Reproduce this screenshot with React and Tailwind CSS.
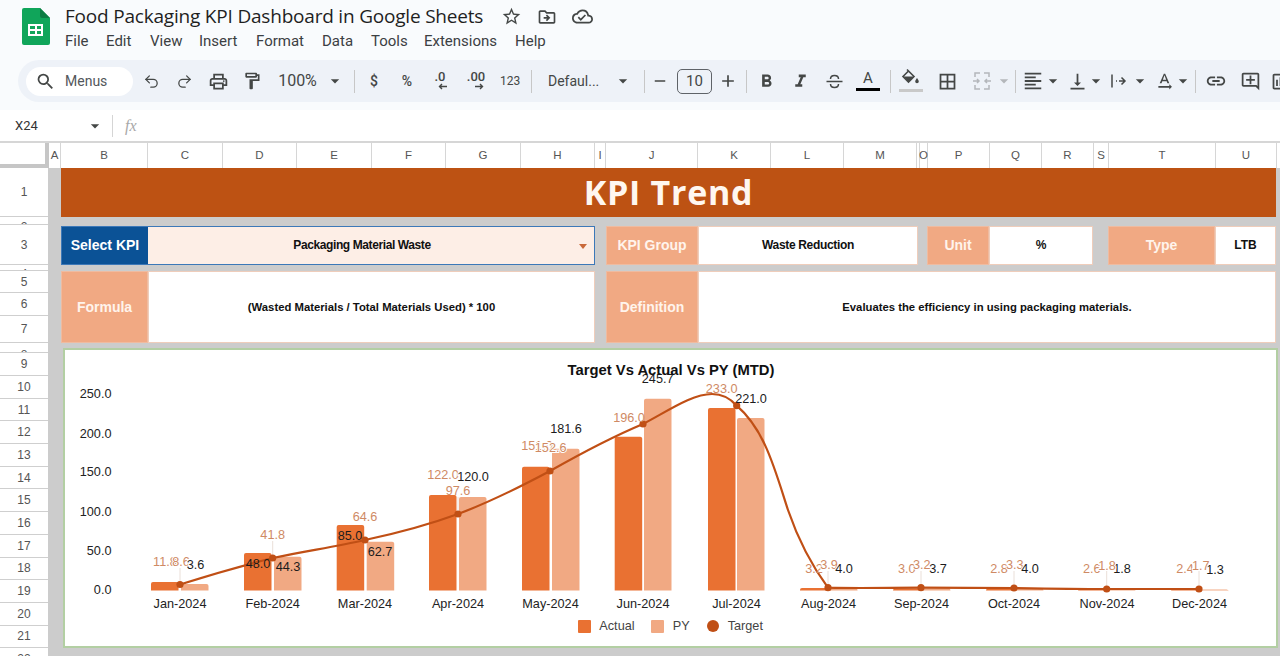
import React from "react";
import {
  MdSearch, MdOutlinePrint, MdOutlineFormatPaint, MdOutlineStarBorder,
  MdOutlineDriveFileMove, MdOutlineCloudDone, MdArrowDropDown, MdRemove, MdAdd,
  MdFormatBold, MdFormatItalic, MdBorderAll,
  MdFormatAlignLeft, MdVerticalAlignBottom, MdTextRotationNone, MdLink, MdOutlineAddComment,
  MdOutlineInsertChart,
} from "react-icons/md";
import { Undo2, Redo2 } from "lucide-react";

const ico = "#444746";
const Slot = ({ className = "", children }) => (
  <div className={`flex shrink-0 items-center justify-center ${className}`}>{children}</div>
);
const Sep = ({ className = "" }) => (
  <Slot className={className}><div className="h-[23px] w-px bg-[#c7c7c7]" /></Slot>
);
const Caret = ({ className = "w-[16px]", color = ico }) => (
  <Slot className={className}><MdArrowDropDown size={20} color={color} className="shrink-0" /></Slot>
);
const Decimal = ({ text, dir }) => (
  <div className="flex flex-col items-center text-[13px] font-medium leading-[12px] text-[#444746]">
    <span>{text}</span>
    <svg width="12" height="8" viewBox="0 0 12 8" className="ml-[6px]">
      {dir === "l"
        ? <path d="M10 3.5H3M5 1 2.5 3.5 5 6" fill="none" stroke="#444746" strokeWidth="1.4" />
        : <path d="M2 3.5h7M7 1l2.5 2.5L7 6" fill="none" stroke="#444746" strokeWidth="1.4" />}
    </svg>
  </div>
);

function Toolbar() {
  return (
    <div className="ml-[18px] flex h-[42px] items-center rounded-l-[21px] bg-[#eef2f8] pl-[8px] text-[#444746]">
      <div className="flex h-[29px] w-[107px] shrink-0 items-center rounded-full bg-white pl-[9px]">
        <MdSearch size={21} color={ico} />
        <span className="ml-[9px] text-[14px] text-[#53575b]">Menus</span>
      </div>
      <Slot className="ml-px w-[34px]"><Undo2 size={17} color={ico} strokeWidth={1.8} /></Slot>
      <Slot className="w-[33px]"><Redo2 size={17} color={ico} strokeWidth={1.8} /></Slot>
      <Slot className="w-[34px]"><MdOutlinePrint size={21} color={ico} /></Slot>
      <Slot className="w-[34px]"><MdOutlineFormatPaint size={20} color={ico} /></Slot>
      <Slot className="w-[57px] text-[16px]">100%</Slot>
      <Caret className="w-[18px]" />
      <Sep className="w-[20px]" />
      <Slot className="w-[20px] text-[14px] font-medium">$</Slot>
      <Slot className="w-[46px] text-[14px] font-medium">%</Slot>
      <Slot className="w-[20px]"><Decimal text=".0" dir="l" /></Slot>
      <Slot className="w-[52px]"><Decimal text=".00" dir="r" /></Slot>
      <Slot className="w-[16px] text-[12px]">123</Slot>
      <Sep className="w-[26px]" />
      <div className="w-[68px] shrink-0 pl-[4px] text-[14px]">Defaul...</div>
      <Caret className="w-[22px]" />
      <Sep className="w-[20px]" />
      <Slot className="w-[12px]"><MdRemove size={18} color={ico} className="shrink-0" /></Slot>
      <Slot className="ml-[11px] h-[25px] w-[35px] rounded-[5px] border border-[#5f6368] text-[15px]">10</Slot>
      <Slot className="w-[32px]"><MdAdd size={20} color={ico} /></Slot>
      <Sep className="w-[4px]" />
      <Slot className="w-[36px]"><MdFormatBold size={21} color={ico} /></Slot>
      <Slot className="w-[32px]"><MdFormatItalic size={21} color={ico} /></Slot>
      <Slot className="w-[36px]">
        <svg width="19" height="19" viewBox="0 0 19 19" fill="none" stroke="#444746" strokeWidth="1.5">
          <path d="M1.500 9.500h16M5.500 7c0-2.200 1.800-3.500 4-3.500s4 1.300 4 3.500M5.500 12c0 2.200 1.800 3.500 4 3.500s4-1.300 4-3.500" />
        </svg>
      </Slot>
      <Slot className="w-[32px] flex-col">
        <span className="text-[15px] leading-[15px]">A</span>
        <div className="mt-[2px] h-[3px] w-[24px] bg-black" />
      </Slot>
      <Sep className="w-[12px]" />
      <Slot className="w-[30px] flex-col">
        <svg width="20" height="18" viewBox="0 0 20 18" className="-mt-[3px]">
          <path d="M6 1.500 13 8.500 7.500 14 2 8.500 7.500 3" fill="none" stroke="#444746" strokeWidth="1.6" />
          <path d="M2.500 8.500H13L7.500 14Z" fill="#444746" />
          <path d="M16 10c1 1.600 1.800 2.400 1.800 3.500a1.800 1.800 0 0 1-3.600 0c0-1.100.8-1.900 1.800-3.500Z" fill="#444746" />
        </svg>
        <div className="mt-[3px] h-[3px] w-[24px] bg-[#c9c9c9]" />
      </Slot>
      <Slot className="w-[42px]"><MdBorderAll size={21} color={ico} /></Slot>
      <Slot className="w-[28px]">
        <svg width="20" height="20" viewBox="0 0 20 20" fill="none" stroke="#b4b7bb" strokeWidth="1.5">
          <path d="M8 2H3v4M3 14v4h5M12 2h5v4M17 14v4h-5M1 10h6M5 8l2 2-2 2M19 10h-6M15 8l-2 2 2 2" />
        </svg>
      </Slot>
      <Caret className="w-[16px]" color="#b4b7bb" />
      <Sep className="w-[6px]" />
      <Slot className="w-[30px]"><MdFormatAlignLeft size={22} color={ico} /></Slot>
      <Caret className="w-[10px]" />
      <Slot className="ml-[6px] w-[26px]"><MdVerticalAlignBottom size={21} color={ico} /></Slot>
      <Caret className="w-[12px]" />
      <Slot className="ml-[2px] w-[24px] pl-[6px]">
        <svg width="18" height="18" viewBox="0 0 18 18" fill="none" stroke="#444746" strokeWidth="1.5">
          <path d="M2 2.500v13M6 9h1M9 9h5.500M11.500 5.500 15 9l-3.500 3.500" />
        </svg>
      </Slot>
      <Caret className="ml-[6px] w-[12px]" />
      <Slot className="ml-[5px] w-[26px]"><MdTextRotationNone size={21} color={ico} /></Slot>
      <Caret className="w-[12px]" />
      <Sep className="w-[13px]" />
      <Slot className="w-[28px]"><MdLink size={22} color={ico} /></Slot>
      <Slot className="w-[40px]"><MdOutlineAddComment size={21} color={ico} /></Slot>
      <Slot className="w-[10px] pl-[10px]"><MdOutlineInsertChart size={21} color={ico} className="shrink-0" /></Slot>
    </div>
  );
}

const columns = [
  ["A", "w-[12px]"], ["B", "w-[87px]"], ["C", "w-[75px]"], ["D", "w-[74px]"], ["E", "w-[75px]"],
  ["F", "w-[74px]"], ["G", "w-[75px]"], ["H", "w-[74px]"], ["I", "w-[11px]"], ["J", "w-[92px]"],
  ["K", "w-[73px]"], ["L", "w-[73px]"], ["M", "w-[73px]"], ["", "w-[3px]"], ["O", "w-[8px]"],
  ["P", "w-[62px]"], ["Q", "w-[52px]"], ["R", "w-[52px]"], ["S", "w-[15px]"], ["T", "w-[107px]"],
  ["U", "w-[61px]"], ["", "w-[4px]"],
];

const rows = [
  ["1", "h-[49px] items-center"], ["2", "h-[8px] items-start pt-[4px]"], ["3", "h-[40px] items-center"], ["4", "h-[6px] items-start pt-[3px]"],
  ["5", "h-[22px] items-center"], ["6", "h-[23px] items-center"], ["7", "h-[27px] items-center"], ["8", "h-[10px] items-start pt-[6px]"],
  ["9", "h-[23px] items-center"], ["10", "h-[22.700px] items-center"], ["11", "h-[22.700px] items-center"], ["12", "h-[22.700px] items-center"],
  ["13", "h-[22.700px] items-center"], ["14", "h-[22.700px] items-center"], ["15", "h-[22.700px] items-center"], ["16", "h-[22.700px] items-center"],
  ["17", "h-[22.700px] items-center"], ["18", "h-[22.700px] items-center"], ["19", "h-[22.700px] items-center"], ["20", "h-[22.700px] items-center"],
  ["21", "h-[22.700px] items-center"], ["22", "h-[22.700px] items-center"],
];

const bars = [
  [151, 582, "a"], [181, 584, "p"], [244, 553, "a"], [274, 556.7, "p"], [336.7, 525, "a"], [366.7, 541.7, "p"],
  [429, 495, "a"], [459, 497, "p"], [522, 466.7, "a"], [552, 448.7, "p"], [614.7, 436.7, "a"], [644, 398.7, "p"],
  [708, 408, "a"], [737, 418, "p"], [800, 588, "a"], [830, 588, "p"], [893, 588.5, "a"], [923, 588.5, "p"],
  [986, 588.5, "a"], [1016, 588.5, "p"], [1078, 589, "a"], [1108, 589, "p"], [1171, 589, "a"], [1201, 589.5, "p"],
];
const points = [
  [180, 584.5], [272.7, 558], [365, 540], [458, 514], [550, 471], [643, 424],
  [736.7, 405.7], [828, 587.7], [921, 587.7], [1014, 588], [1106.7, 589], [1199, 589],
];
const O = "#cf8a64";
const K = "#1c1c1c";
const labels = [
  [165, 562, "11.8", O], [181, 562, "8.6", O, 1], [195.5, 565, "3.6", K, 1],
  [272.7, 534.7, "41.8", O], [258, 564, "48.0", K], [288, 566.7, "44.3", K],
  [365, 516.7, "64.6", O], [350, 536, "85.0", K], [380, 552, "62.7", K],
  [443, 475, "122.0", O], [473, 477, "120.0", K, 1], [458, 491, "97.6", O],
  [537, 446, "151.0", O], [550.7, 447.7, "152.6", O, 1], [566, 429, "181.6", K],
  [629, 417.7, "196.0", O], [657.7, 379, "245.7", K],
  [721.7, 388.7, "233.0", O], [751, 398.7, "221.0", K],
  [814, 568.7, "3.2", O], [829, 565, "3.9", O, 1], [844, 569, "4.0", K, 1],
  [906.7, 568.7, "3.0", O], [921.7, 565, "3.2", O, 1], [938, 568.7, "3.7", K, 1],
  [999, 568.7, "2.8", O], [1014.7, 565, "3.3", O, 1], [1030, 568.7, "4.0", K, 1],
  [1091.7, 569, "2.6", O], [1122, 569.3, "1.8", K], [1107, 565.5, "1.8", O, 1],
  [1185, 569.3, "2.4", O], [1215, 570, "1.3", K], [1200.7, 565.5, "1.7", O, 1],
];
const leaders = [[180, 568, 584], [272.7, 541, 558], [458, 497, 514], [828, 571, 587], [921, 571, 587], [1014, 571, 587], [1106.7, 571, 588], [1199, 571, 588]];
const yTicks = [["250.0", 394], ["200.0", 433.7], ["150.0", 472], ["100.0", 512], ["50.0", 550.7], ["0.0", 590]];
const months = [
  ["Jan-2024", 180], ["Feb-2024", 272.7], ["Mar-2024", 365], ["Apr-2024", 458], ["May-2024", 550.5], ["Jun-2024", 643],
  ["Jul-2024", 736.5], ["Aug-2024", 828.5], ["Sep-2024", 921.5], ["Oct-2024", 1014], ["Nov-2024", 1107], ["Dec-2024", 1199.5],
];
const curve =
  "M180 584.5C210 575 245 565 272.7 558C305 551 335 547 365 540C398 533 428 525 458 514C490 502 520 487 550 471C580 454 612 437 643 424C668 411 692 394 712 394C722 394 730 398 736.7 405.7C765 430 775 470 788 510C800 545 815 570 828 587.7C860 588.5 890 587.7 921 587.7C950 587.7 985 588 1014 588C1045 588.5 1075 589 1106.7 589L1199 589";

function Chart() {
  return (
    <svg viewBox="65 350 1210.5 296" className="block h-full w-full" fontFamily="'Liberation Sans', Arial, sans-serif">
      {bars.map(([x, top, k], i) => (
        <path
          key={i}
          d={`M${x} 590.5V${top + 2}Q${x} ${top} ${x + 2} ${top}H${x + 25.5}Q${x + 27.5} ${top} ${x + 27.5} ${top + 2}V590.5Z`}
          fill={k === "a" ? "#e97132" : "#f1a983"}
        />
      ))}
      {leaders.map(([x, a, b], i) => (
        <line key={i} x1={x} x2={x} y1={a} y2={b} stroke="#eadfd8" strokeWidth="1" />
      ))}
      <path d={curve} fill="none" stroke="#c04f15" strokeWidth="2.2" />
      {points.map(([x, y], i) => <circle key={i} cx={x} cy={y} r="3.6" fill="#c04f15" />)}
      {yTicks.map(([t, y]) => (
        <text key={t} x="111.5" y={y} textAnchor="end" dominantBaseline="central" fontSize="12.7" fill="#222">{t}</text>
      ))}
      {months.map(([t, x]) => (
        <text key={t} x={x} y="603.5" textAnchor="middle" dominantBaseline="central" fontSize="12.7" fill="#222">{t}</text>
      ))}
      {labels.map(([x, y, t, c, halo], i) => (
        <text
          key={i} x={x} y={y} textAnchor="middle" dominantBaseline="central" fontSize="12.7" fill={c}
          stroke={halo ? "#ffffff" : "none"} strokeWidth={halo ? 2 : 0} paintOrder="stroke"
        >{t}</text>
      ))}
      <text x="671" y="370" textAnchor="middle" dominantBaseline="central" fontSize="14.8" fontWeight="700" fill="#111">Target Vs Actual Vs PY (MTD)</text>
      <rect x="578" y="620" width="13" height="13" rx="1" fill="#e97132" />
      <text x="599.3" y="626" dominantBaseline="central" fontSize="12.7" fill="#444">Actual</text>
      <rect x="651" y="620" width="13" height="13" rx="1" fill="#f1a983" />
      <text x="672.7" y="626" dominantBaseline="central" fontSize="12.7" fill="#444">PY</text>
      <circle cx="713" cy="626" r="6" fill="#c04f15" />
      <text x="727.7" y="626" dominantBaseline="central" fontSize="12.7" fill="#444">Target</text>
    </svg>
  );
}

const Lbl = ({ className = "", children }) => (
  <div className={`flex items-center justify-center border border-[#efbba0] bg-[#f1a983] text-[14px] font-bold text-[#fff4ec] ${className}`}>{children}</div>
);
const Val = ({ className = "", children }) => (
  <div className={`flex items-center justify-center border border-[#efcdbb] bg-white font-bold text-[#111] ${className}`}>{children}</div>
);

export default function App() {
  return (
    <div className="h-[656px] w-[1280px] overflow-hidden bg-white font-['Roboto',sans-serif]">
      <header className="h-[110px] bg-[#f9fbfd]">
        <div className="flex h-[60px]">
          <div className="pl-[22px] pt-[8px]">
            <svg width="28" height="37" viewBox="0 0 28 37">
              <path d="M2 0H18L28 10V35a2 2 0 0 1-2 2H2a2 2 0 0 1-2-2V2a2 2 0 0 1 2-2Z" fill="#10a55a" />
              <path d="M18 0 28 10H20a2 2 0 0 1-2-2Z" fill="#0c7c43" />
              <path d="M6 16H21V28H6ZM8 18V21H13V18ZM15 18V21H19V18ZM8 23V26H13V23ZM15 23V26H19V23Z" fill="#fff" fillRule="evenodd" />
            </svg>
          </div>
          <div className="pl-[15px]">
            <div className="flex h-[33px] items-center">
              <h1 className="w-[418px] whitespace-nowrap font-['Open_Sans',sans-serif] text-[19px] tracking-[-0.2px] text-[#1f1f1f]">Food Packaging KPI Dashboard in Google Sheets</h1>
              <div className="ml-[18px] flex items-center gap-[15px]">
                <MdOutlineStarBorder size={21} color={ico} />
                <MdOutlineDriveFileMove size={20} color={ico} />
                <MdOutlineCloudDone size={21} color={ico} />
              </div>
            </div>
            <nav className="flex h-[16px] items-center text-[15px] text-[#3c4043]">
              <span className="w-[41px]">File</span>
              <span className="w-[44px]">Edit</span>
              <span className="w-[49px]">View</span>
              <span className="w-[57px]">Insert</span>
              <span className="w-[66px]">Format</span>
              <span className="w-[49px]">Data</span>
              <span className="w-[53px]">Tools</span>
              <span className="w-[91px]">Extensions</span>
              <span>Help</span>
            </nav>
          </div>
        </div>
        <Toolbar />
      </header>

      <div className="flex h-[31px] items-center bg-white">
        <div className="w-[85px] pl-[15px] text-[13px] text-[#333]">X24</div>
        <MdArrowDropDown size={20} color={ico} />
        <div className="ml-[7px] h-[22px] w-px bg-[#d5d5d5]" />
        <span className="ml-[12px] font-['Liberation_Serif',serif] text-[16px] italic text-[#a8a8a8]">fx</span>
      </div>

      <div className="flex h-[27px] border-t-2 border-[#d6d6d6] bg-white">
        <div className="w-[49px] shrink-0 border-b-[4px] border-r-[4px] border-[#c6c6c6]" />
        {columns.map(([c, w], i) => (
          <div key={i} className={`flex shrink-0 items-center justify-center border-r border-[#d6d6d6] font-['Liberation_Sans',sans-serif] text-[11.5px] text-[#555] ${w}`}>{c}</div>
        ))}
      </div>

      <div className="flex h-[488px] bg-[#cccccc] font-['Liberation_Sans',Arial,sans-serif]">
        <div className="w-[48px] shrink-0 overflow-hidden bg-white">
          {rows.map(([r, h]) => (
            <div key={r} className={`flex justify-center overflow-hidden border-b border-[#cfcfcf] text-[12px] leading-none text-[#555] ${h}`}>{r}</div>
          ))}
        </div>
        <main className="flex min-w-0 flex-1 flex-col pl-[13px] pr-[4px]">
          <div className="flex h-[49px] shrink-0 items-center justify-center bg-[#bd5213] font-['Open_Sans',sans-serif] text-[34px] font-bold tracking-[0.7px] text-[#fff7ef]">KPI Trend</div>
          <div className="mt-[8.5px] grid h-[117.5px] shrink-0 grid-cols-[87px_447px_11px_92px_220px_9px_62px_104px_15px_107px_61px] grid-rows-[39.5px_72px] gap-y-[6px]">
            <div className="flex items-center justify-center border border-r-0 border-[#3c78b8] bg-[#0b5296] text-[14px] font-bold text-white">Select KPI</div>
            <div className="relative flex items-center justify-center border border-l-0 border-[#3c78b8] bg-[#fdeee6] pr-[18px] text-[12px] font-bold tracking-[-0.4px] text-[#111]">
              Packaging Material Waste
              <div className="absolute right-[7px] top-[17px] h-0 w-0 border-x-[4.5px] border-t-[5px] border-x-transparent border-t-[#c9693a]" />
            </div>
            <div />
            <Lbl>KPI Group</Lbl>
            <Val className="text-[12px] tracking-[-0.33px]">Waste Reduction</Val>
            <div />
            <Lbl>Unit</Lbl>
            <Val className="text-[12px]">%</Val>
            <div />
            <Lbl>Type</Lbl>
            <Val className="text-[12px]">LTB</Val>

            <Lbl>Formula</Lbl>
            <Val className="text-[11.3px]">(Wasted Materials / Total Materials Used) * 100</Val>
            <div />
            <Lbl>Definition</Lbl>
            <Val className="col-span-7 text-[11.3px]">Evaluates the efficiency in using packaging materials.</Val>
          </div>
          <section className="mb-[8px] ml-[2px] mr-[-1.5px] mt-[5px] h-[300px] shrink-0 border-2 border-[#b3cfa3] bg-white">
            <Chart />
          </section>
        </main>
      </div>
    </div>
  );
}
